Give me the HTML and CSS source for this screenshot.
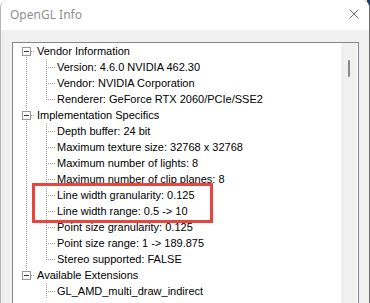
FILE: index.html
```html
<!DOCTYPE html>
<html lang="en">

<head>
    <meta charset="UTF-8">
    <meta name="viewport" content="width=device-width, initial-scale=1.0">
    <title>OpenGL Info</title>
    <link rel="stylesheet" href="styles.css">
</head>

<body>
    <div class="window">
        <div class="titlebar">
            <span class="title">OpenGL Info</span>
            <svg class="close" width="10" height="10" viewBox="0 0 10 10">
                <path d="M0.5 0.5 L9.5 9.5 M9.5 0.5 L0.5 9.5" stroke="#707070" stroke-width="1" fill="none" />
            </svg>
        </div>

        <div class="content">
            <div class="treeview">
                <div class="tree">
                    <div class="row root first"><span class="elbow"><span class="expander"></span></span><span class="label">Vendor Information</span></div>
                    <div class="row"><span class="guide line"></span><span class="elbow"></span><span class="label">Version: 4.6.0 NVIDIA 462.30</span></div>
                    <div class="row"><span class="guide line"></span><span class="elbow"></span><span class="label">Vendor: NVIDIA Corporation</span></div>
                    <div class="row"><span class="guide line"></span><span class="elbow last"></span><span class="label">Renderer: GeForce RTX 2060/PCIe/SSE2</span></div>

                    <div class="row root"><span class="elbow"><span class="expander"></span></span><span class="label">Implementation Specifics</span></div>
                    <div class="row"><span class="guide line"></span><span class="elbow"></span><span class="label">Depth buffer: 24 bit</span></div>
                    <div class="row"><span class="guide line"></span><span class="elbow"></span><span class="label">Maximum texture size: 32768 x 32768</span></div>
                    <div class="row"><span class="guide line"></span><span class="elbow"></span><span class="label">Maximum number of lights: 8</span></div>
                    <div class="row"><span class="guide line"></span><span class="elbow"></span><span class="label">Maximum number of clip planes: 8</span></div>
                    <div class="row"><span class="guide line"></span><span class="elbow"></span><span class="label">Line width granularity: 0.125</span></div>
                    <div class="row"><span class="guide line"></span><span class="elbow"></span><span class="label">Line width range: 0.5 -&gt; 10</span></div>
                    <div class="row"><span class="guide line"></span><span class="elbow"></span><span class="label">Point size granularity: 0.125</span></div>
                    <div class="row"><span class="guide line"></span><span class="elbow"></span><span class="label">Point size range: 1 -&gt; 189.875</span></div>
                    <div class="row"><span class="guide line"></span><span class="elbow last"></span><span class="label">Stereo supported: FALSE</span></div>

                    <div class="row root last"><span class="elbow"><span class="expander"></span></span><span class="label">Available Extensions</span></div>
                    <div class="row"><span class="guide"></span><span class="elbow"></span><span class="label">GL_AMD_multi_draw_indirect</span></div>

                    <!-- annotation -->
                    <div class="highlight"></div>
                </div>
                <div class="scrollbar">
                    <div class="thumb"></div>
                </div>
            </div>
        </div>
    </div>
</body>

</html>
```

FILE: styles.css
```css
html {
    background: linear-gradient(#1d3b5e, #1d3b5e) right top / 3px 30px no-repeat, #ffffff;
}

body {
    margin: 0;
    height: 303px;
    overflow: hidden;
    font-family: "Liberation Sans", Arial, sans-serif;
}

.window {
    height: 100%;
    display: flex;
    flex-direction: column;
    border-left: 1px solid #b4b4b4;
    border-right: 1px solid #6e6e6e;
    border-radius: 8px 8px 0 0;
    overflow: hidden;
    background: #f0f0f0;
}

.titlebar {
    height: 30px;
    flex-shrink: 0;
    background: #ffffff;
    display: flex;
    align-items: center;
    justify-content: space-between;
    padding: 0 10px 0 9px;
}

.title {
    font-family: "Noto Sans", "Open Sans", sans-serif;
    font-size: 12px;
    color: #8f8f8f;
    padding-bottom: 1px;
}

.close {
    margin-bottom: 2px;
}

.content {
    flex: 1;
    padding: 12px 10px 0 11px;
}

.treeview {
    height: 300px;
    display: flex;
    background: #ffffff;
    border: 1px solid #828790;
}

.tree {
    flex: 1;
    position: relative;
    font-size: 11px;
    color: #000000;
}

.row {
    display: flex;
    height: 16px;
    line-height: 16px;
    white-space: nowrap;
}

.guide {
    width: 20px;
    flex-shrink: 0;
}

.guide.line {
    background: repeating-linear-gradient(#a0a0a0 0 1px, transparent 1px 2px) 13px 0 / 1px 100% no-repeat;
}

.elbow {
    width: 22px;
    flex-shrink: 0;
    display: flex;
    align-items: center;
    background:
        repeating-linear-gradient(to right, #a0a0a0 0 1px, transparent 1px 2px) 13px 8px / 9px 1px no-repeat,
        repeating-linear-gradient(#a0a0a0 0 1px, transparent 1px 2px) 13px 0 / 1px 100% no-repeat;
}

.elbow.last {
    background:
        repeating-linear-gradient(to right, #a0a0a0 0 1px, transparent 1px 2px) 13px 8px / 9px 1px no-repeat,
        repeating-linear-gradient(#a0a0a0 0 1px, transparent 1px 2px) 13px 0 / 1px 9px no-repeat;
}

.root .elbow {
    background:
        repeating-linear-gradient(to right, #a0a0a0 0 1px, transparent 1px 2px) 18px 8px / 4px 1px no-repeat,
        repeating-linear-gradient(#a0a0a0 0 1px, transparent 1px 2px) 13px 0 / 1px 100% no-repeat;
}

.root.first .elbow {
    background:
        repeating-linear-gradient(to right, #a0a0a0 0 1px, transparent 1px 2px) 18px 8px / 4px 1px no-repeat,
        repeating-linear-gradient(#a0a0a0 0 1px, transparent 1px 2px) 13px 12px / 1px 4px no-repeat;
}

.root.last .elbow {
    background:
        repeating-linear-gradient(to right, #a0a0a0 0 1px, transparent 1px 2px) 18px 8px / 4px 1px no-repeat,
        repeating-linear-gradient(#a0a0a0 0 1px, transparent 1px 2px) 13px 0 / 1px 4px no-repeat;
}

.expander {
    width: 9px;
    height: 9px;
    box-sizing: border-box;
    margin-left: 9px;
    border: 1px solid #969696;
    background: linear-gradient(#404040, #404040) center / 5px 1px no-repeat, #ffffff;
}

.label {
    padding-left: 2px;
}

.scrollbar {
    width: 16px;
    margin-right: 1px;
    flex-shrink: 0;
    background: #f0f0f0;
    display: flex;
    justify-content: center;
    padding-top: 17px;
    box-sizing: border-box;
}

.thumb {
    width: 2px;
    height: 17px;
    border-radius: 1px;
    background: #8a8a8a;
}

.highlight {
    position: absolute;
    left: 19px;
    top: 140px;
    width: 181px;
    height: 40px;
    box-sizing: border-box;
    border: 3px solid #e8453c;
}
```
